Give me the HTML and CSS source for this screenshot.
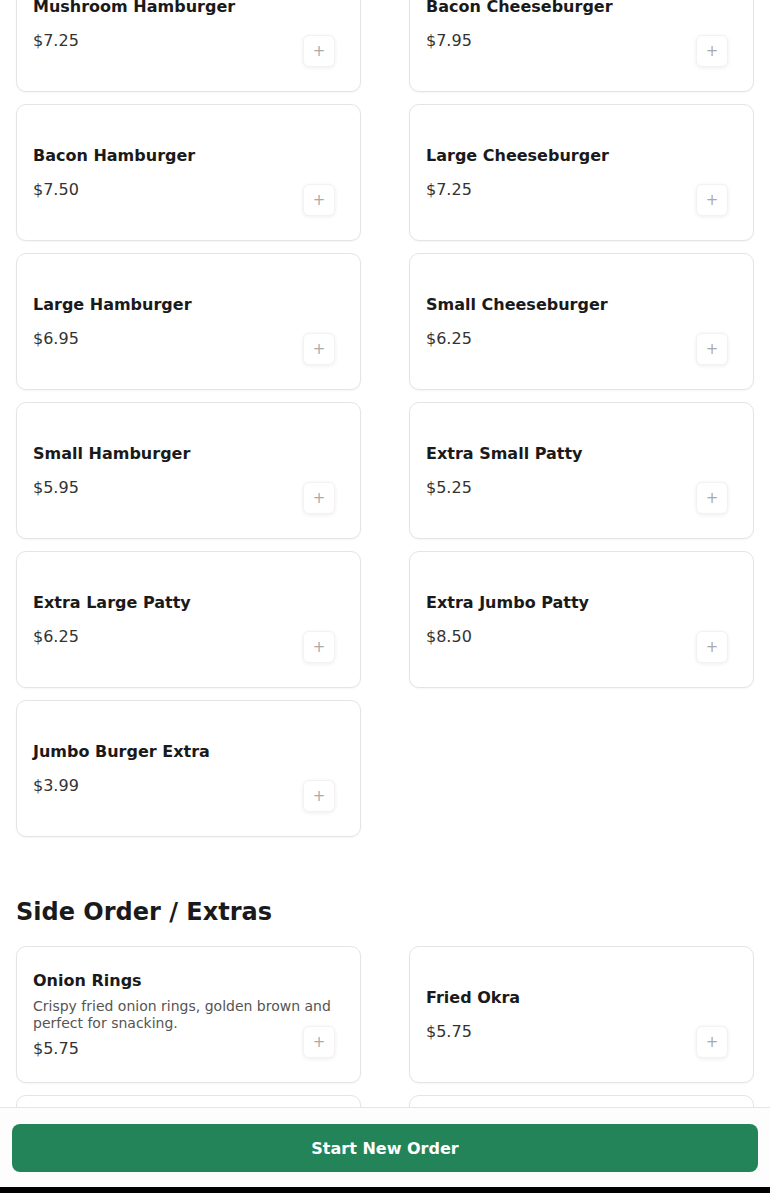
FILE: index.html
```html
<!DOCTYPE html>
<html lang="en">
<head>
  <meta charset="UTF-8">
  <meta name="viewport" content="width=device-width, initial-scale=1.0">
  <title>Menu</title>
  <link rel="stylesheet" href="styles.css">
</head>
<body>
  <main class="menu">
    <section class="category category_first">
      <div class="item_grid">
        <div class="item_card">
          <div class="item_info">
            <h3 class="item_name">Mushroom Hamburger</h3>
            <p class="item_price">$7.25</p>
          </div>
          <button class="add_btn" type="button">+</button>
        </div>
        <div class="item_card">
          <div class="item_info">
            <h3 class="item_name">Bacon Cheeseburger</h3>
            <p class="item_price">$7.95</p>
          </div>
          <button class="add_btn" type="button">+</button>
        </div>
        <div class="item_card">
          <div class="item_info">
            <h3 class="item_name">Bacon Hamburger</h3>
            <p class="item_price">$7.50</p>
          </div>
          <button class="add_btn" type="button">+</button>
        </div>
        <div class="item_card">
          <div class="item_info">
            <h3 class="item_name">Large Cheeseburger</h3>
            <p class="item_price">$7.25</p>
          </div>
          <button class="add_btn" type="button">+</button>
        </div>
        <div class="item_card">
          <div class="item_info">
            <h3 class="item_name">Large Hamburger</h3>
            <p class="item_price">$6.95</p>
          </div>
          <button class="add_btn" type="button">+</button>
        </div>
        <div class="item_card">
          <div class="item_info">
            <h3 class="item_name">Small Cheeseburger</h3>
            <p class="item_price">$6.25</p>
          </div>
          <button class="add_btn" type="button">+</button>
        </div>
        <div class="item_card">
          <div class="item_info">
            <h3 class="item_name">Small Hamburger</h3>
            <p class="item_price">$5.95</p>
          </div>
          <button class="add_btn" type="button">+</button>
        </div>
        <div class="item_card">
          <div class="item_info">
            <h3 class="item_name">Extra Small Patty</h3>
            <p class="item_price">$5.25</p>
          </div>
          <button class="add_btn" type="button">+</button>
        </div>
        <div class="item_card">
          <div class="item_info">
            <h3 class="item_name">Extra Large Patty</h3>
            <p class="item_price">$6.25</p>
          </div>
          <button class="add_btn" type="button">+</button>
        </div>
        <div class="item_card">
          <div class="item_info">
            <h3 class="item_name">Extra Jumbo Patty</h3>
            <p class="item_price">$8.50</p>
          </div>
          <button class="add_btn" type="button">+</button>
        </div>
        <div class="item_card">
          <div class="item_info">
            <h3 class="item_name">Jumbo Burger Extra</h3>
            <p class="item_price">$3.99</p>
          </div>
          <button class="add_btn" type="button">+</button>
        </div>
      </div>
    </section>

    <section class="category">
      <h2 class="category_title">Side Order / Extras</h2>
      <div class="item_grid">
        <div class="item_card">
          <div class="item_info">
            <h3 class="item_name">Onion Rings</h3>
            <p class="item_desc">Crispy fried onion rings, golden brown and perfect for snacking.</p>
            <p class="item_price">$5.75</p>
          </div>
          <button class="add_btn" type="button">+</button>
        </div>
        <div class="item_card">
          <div class="item_info">
            <h3 class="item_name">Fried Okra</h3>
            <p class="item_price">$5.75</p>
          </div>
          <button class="add_btn" type="button">+</button>
        </div>
        <div class="item_card">
          <div class="item_info">
            <h3 class="item_name">French Fries</h3>
            <p class="item_price">$3.95</p>
          </div>
          <button class="add_btn" type="button">+</button>
        </div>
        <div class="item_card">
          <div class="item_info">
            <h3 class="item_name">Cheese Fries</h3>
            <p class="item_price">$4.95</p>
          </div>
          <button class="add_btn" type="button">+</button>
        </div>
      </div>
    </section>
  </main>

  <footer class="order_bar">
    <button class="order_btn" type="button">Start New Order</button>
  </footer>
  <div class="bottom_edge"></div>
</body>
</html>
```

FILE: styles.css
```css
*{
  margin: 0;
  padding: 0;
  box-sizing: border-box;
}

body{
  font-family: "DejaVu Sans", Verdana, sans-serif;
  background-color: #fff;
  color: #1a1a1a;
}

.menu{
  padding: 0 16px 120px;
}

/* page is scrolled a bit, first row is cut at the top */
.category_first{
  margin-top: -45px;
}

.category_title{
  font-size: 24px;
  line-height: 29px;
  font-weight: bold;
  color: #1a1a1a;
  margin: 61px 0 19px;
}

.item_grid{
  display: grid;
  grid-template-columns: 1fr 1fr;
  column-gap: 48px;
  row-gap: 12px;
}

.item_card{
  position: relative;
  height: 137px;
  padding: 0 16px;
  background-color: #fff;
  border: 1px solid #e4e4e4;
  border-radius: 10px;
  box-shadow: 0 1px 2px rgba(0, 0, 0, 0.04);
  display: flex;
  align-items: center;
}

.item_info{
  width: 100%;
}

.item_name{
  font-size: 16px;
  line-height: 24px;
  font-weight: bold;
  color: #1a1a1a;
}

.item_name + .item_price{
  margin-top: 10px;
}

.item_desc{
  font-size: 14px;
  line-height: 17px;
  color: #555;
  margin: 5px 0;
}

.item_price{
  font-size: 16px;
  line-height: 24px;
  color: #333;
}

.add_btn{
  position: absolute;
  right: 25px;
  bottom: 24px;
  width: 32px;
  height: 32px;
  border: 1px solid #f2f2f2;
  border-radius: 6px;
  background-color: #fff;
  box-shadow: 0 1px 4px rgba(0, 0, 0, 0.07);
  color: #aaa;
  font-family: "DejaVu Sans", sans-serif;
  font-size: 15px;
  line-height: 1;
  cursor: pointer;
}

.order_bar{
  position: fixed;
  left: 0;
  right: 0;
  bottom: 6px;
  padding: 16px 12px 15px;
  background-color: #fcfdfc;
  border-top: 1px solid #e6e6e6;
}

.order_btn{
  display: block;
  width: 100%;
  height: 48px;
  border: none;
  border-radius: 8px;
  background-color: #23845a;
  color: #fff;
  font-family: "DejaVu Sans", sans-serif;
  font-size: 16px;
  font-weight: bold;
  cursor: pointer;
}

.bottom_edge{
  position: fixed;
  left: 0;
  right: 0;
  bottom: 0;
  height: 6px;
  background-color: #000;
}
```
